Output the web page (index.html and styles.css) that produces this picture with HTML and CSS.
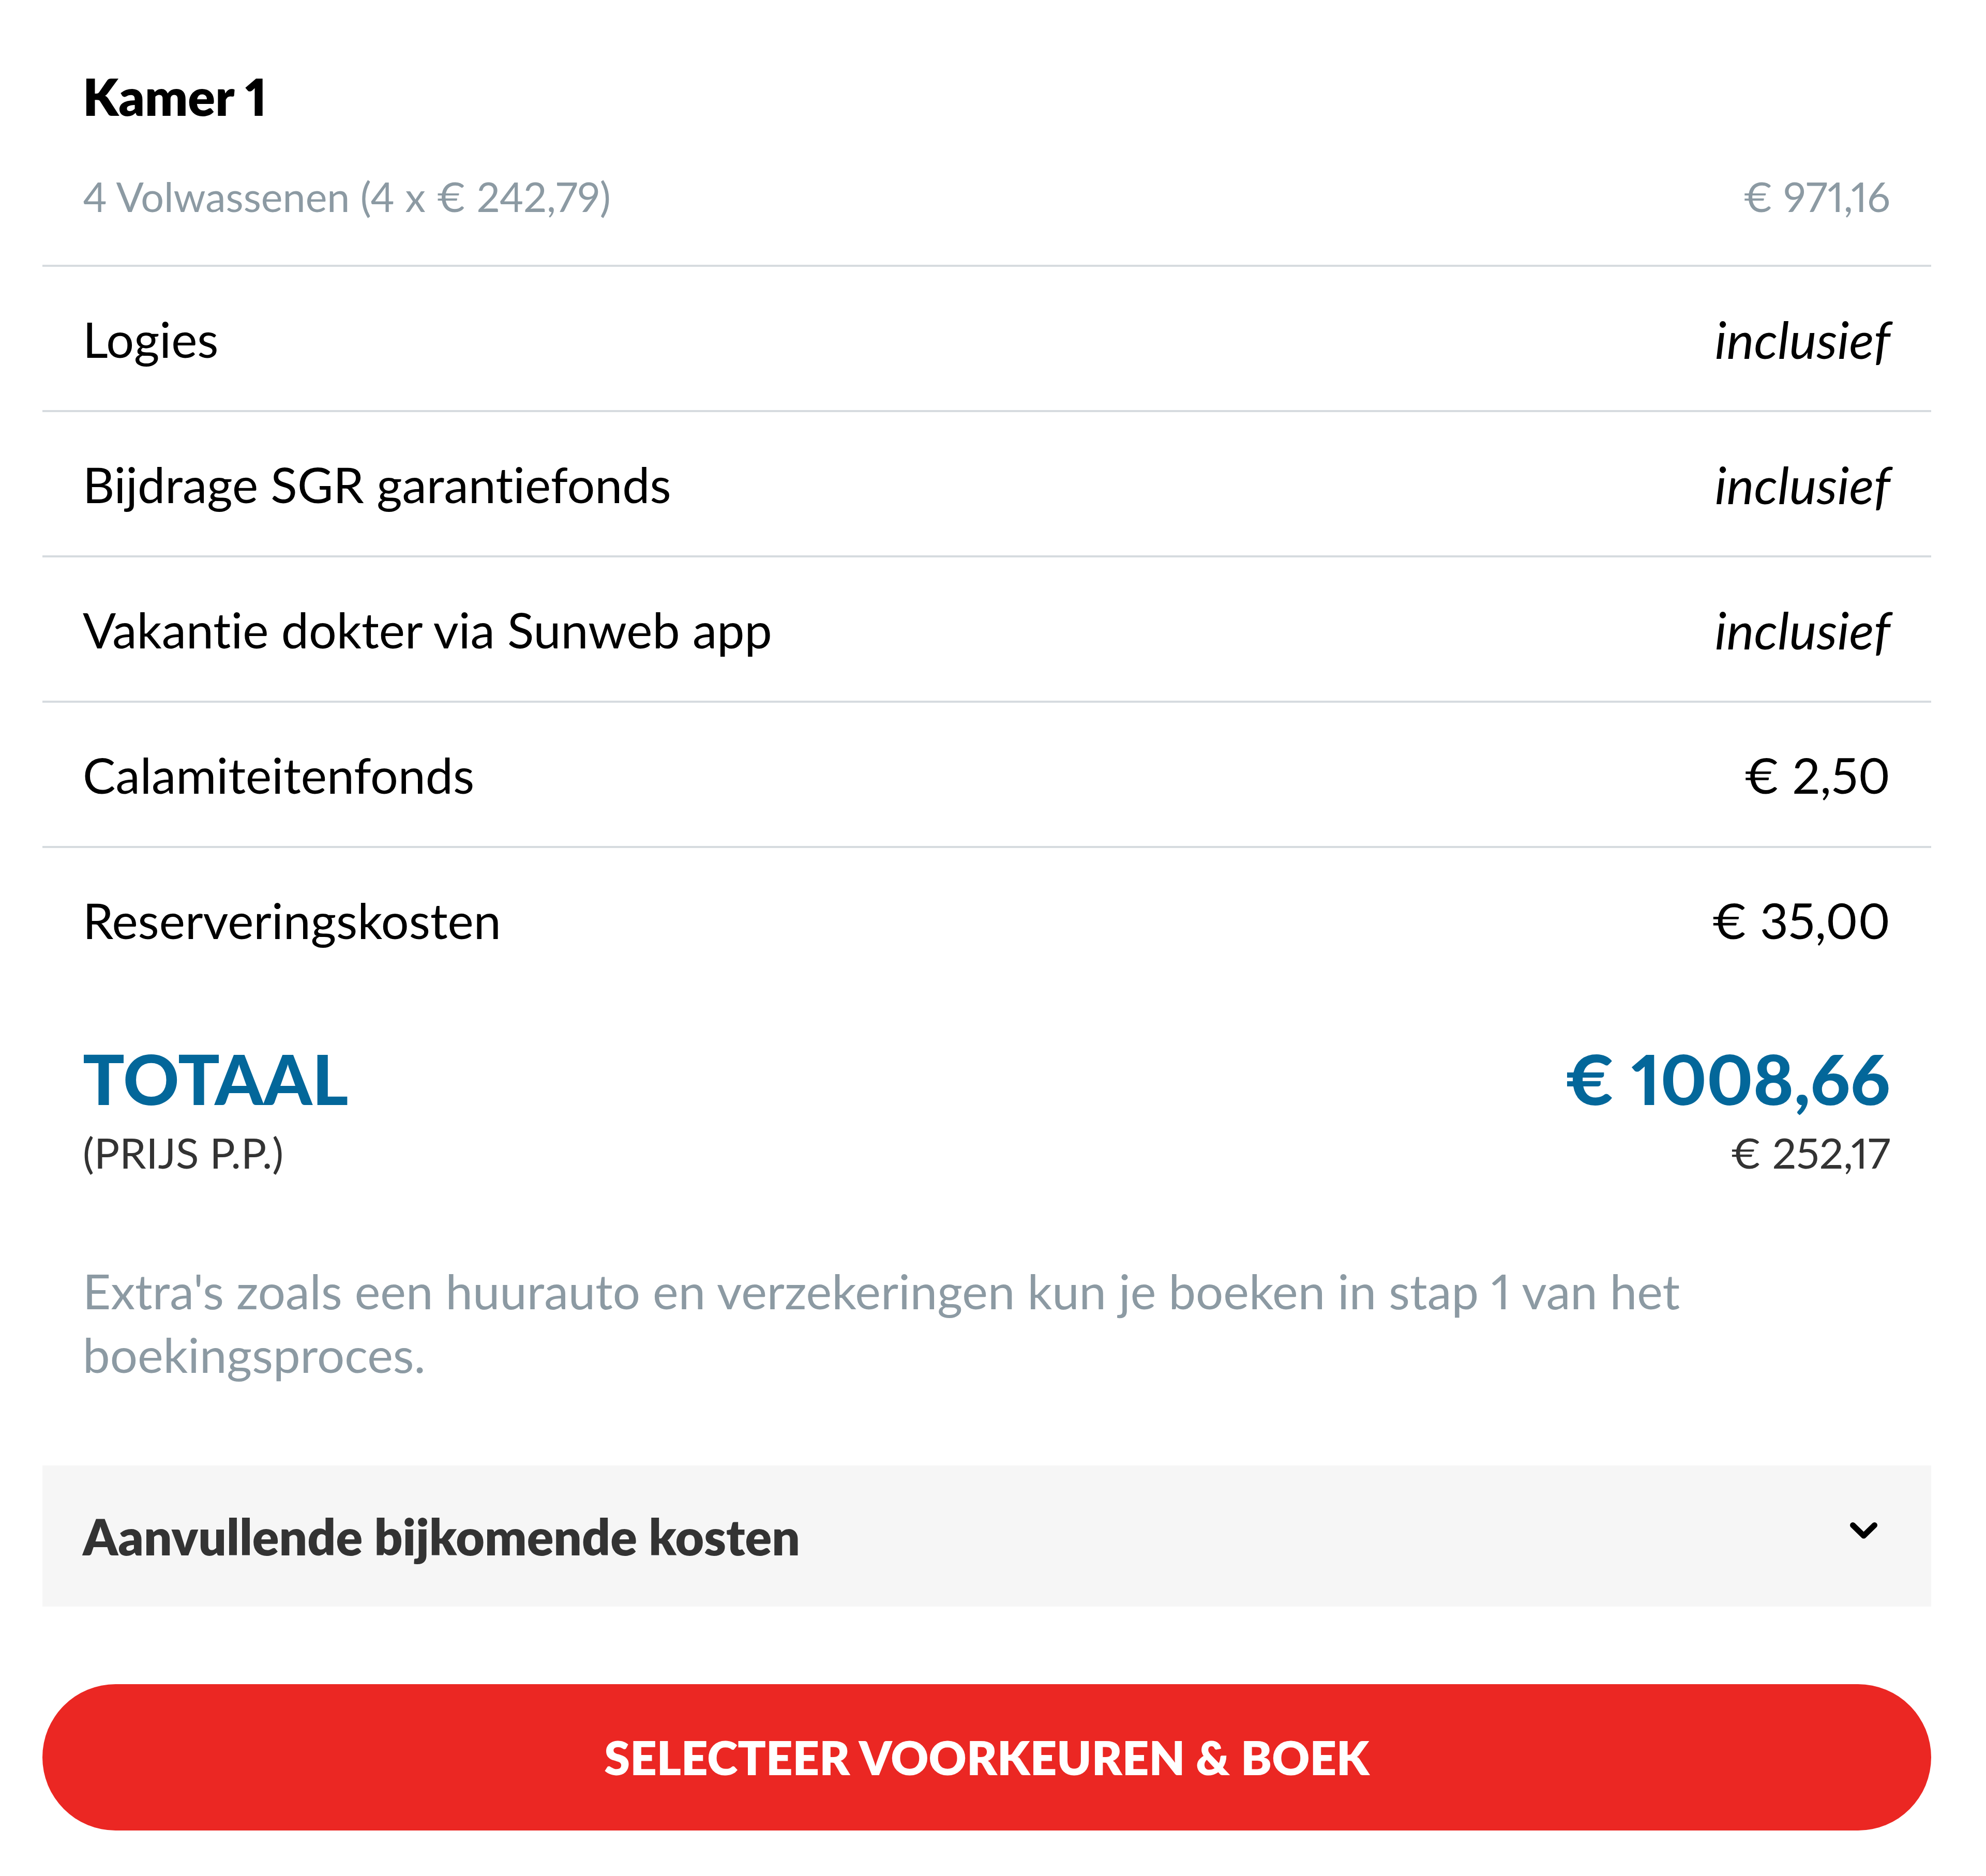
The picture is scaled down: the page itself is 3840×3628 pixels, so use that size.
FILE: index.html
```html
<!DOCTYPE html>
<html lang="nl">
<head>
<meta charset="utf-8">
<title>Prijsoverzicht</title>
<link rel="stylesheet" href="styles.css">
</head>
<body>
<div class="summary">
  <div class="room">
    <div class="room-title">Kamer 1</div>
    <div class="room-line"><span>4 Volwassenen (4 x € 242,79)</span><span>€ 971,16</span></div>
  </div>
  <div class="row"><span>Logies</span><span class="incl">inclusief</span></div>
  <div class="row"><span>Bijdrage SGR garantiefonds</span><span class="incl">inclusief</span></div>
  <div class="row"><span>Vakantie dokter via Sunweb app</span><span class="incl">inclusief</span></div>
  <div class="row"><span>Calamiteitenfonds</span><span>€ 2,50</span></div>
  <div class="row"><span>Reserveringskosten</span><span>€ 35,00</span></div>
  <div class="total">
    <div class="total-main"><span>TOTAAL</span><span>€ 1008,66</span></div>
    <div class="total-sub"><span>(PRIJS P.P.)</span><span>€ 252,17</span></div>
  </div>
  <p class="note">Extra's zoals een huurauto en verzekeringen kun je boeken in stap 1 van het boekingsproces.</p>
  <div class="extra-costs">
    <span>Aanvullende bijkomende kosten</span>
    <svg class="chevron" width="53" height="34" viewBox="0 0 53 34" aria-hidden="true"><polyline points="5.5,5.5 26.5,26 47.5,5.5" fill="none" stroke="#000" stroke-width="11" stroke-linecap="round" stroke-linejoin="round"/></svg>
  </div>
  <button class="cta" type="button">SELECTEER VOORKEUREN &amp; BOEK</button>
</div>
</body>
</html>
```
FILE: styles.css
```css
html, body {
  margin: 0;
  padding: 0;
  background: #ffffff;
}

body {
  font-family: Lato, "Noto Sans", sans-serif;
  color: #000000;
  font-variant-ligatures: no-common-ligatures;
  font-variant-numeric: proportional-nums;
}

.summary {
  margin-left: 82px;
  width: 3652px;
  padding-bottom: 88px;
}

.room {
  padding: 129px 79px 82px 78px;
}

.room-title {
  font-weight: 800;
  font-size: 98px;
  line-height: 115px;
}

.room-line {
  margin-top: 85px;
  display: flex;
  justify-content: space-between;
  font-size: 79px;
  line-height: 101px;
  color: #8c9aa3;
}

.row {
  border-top: 4px solid #d6dbdf;
  height: 277px;
  display: flex;
  align-items: center;
  justify-content: space-between;
  padding: 0 79px 0 78px;
  font-size: 95px;
  line-height: 118px;
}

.incl {
  font-style: italic;
  font-size: 100px;
}

.total {
  padding: 88px 79px 0 78px;
}

.total-main {
  display: flex;
  justify-content: space-between;
  font-weight: 900;
  font-size: 134px;
  line-height: 161px;
  color: #03679a;
}

.total-sub {
  margin-top: 13px;
  display: flex;
  justify-content: space-between;
  font-size: 82px;
  line-height: 98px;
  color: #333333;
}

.note {
  margin: 157px 0 0;
  padding: 0 79px 0 78px;
  font-size: 94px;
  line-height: 123px;
  color: #8c9aa3;
}

.extra-costs {
  margin-top: 154px;
  height: 273px;
  background: #f6f6f6;
  display: flex;
  align-items: center;
  justify-content: space-between;
  padding: 0 104px 0 78px;
  font-weight: 800;
  font-size: 96px;
  line-height: 108px;
  color: #333333;
}

.chevron {
  display: block;
  margin-bottom: 20px;
}

.cta {
  display: block;
  width: 100%;
  height: 283px;
  margin-top: 150px;
  padding: 0;
  border: 0;
  border-radius: 142px;
  background: #eb2723;
  color: #ffffff;
  font-family: Lato, "Noto Sans", sans-serif;
  font-weight: 800;
  font-size: 90px;
  line-height: 115px;
}
```
